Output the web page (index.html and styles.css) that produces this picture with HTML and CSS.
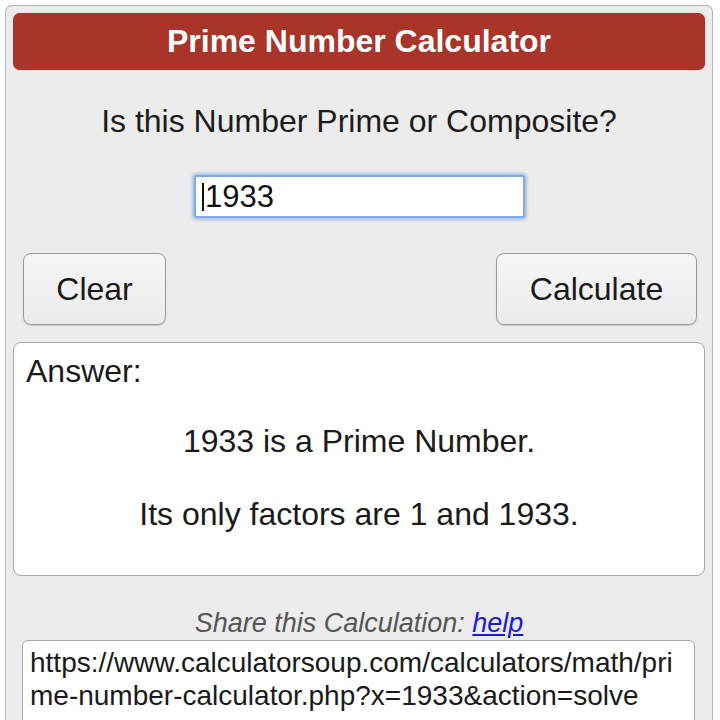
FILE: index.html
```html
<!DOCTYPE html>
<html lang="en">
<head>
<meta charset="utf-8">
<title>Prime Number Calculator</title>
<link rel="stylesheet" href="styles.css">
</head>
<body>
<div class="calc">
  <div class="calc-header">Prime Number Calculator</div>
  <div class="question">Is this Number Prime or Composite?</div>
  <div class="input-row">
    <div class="num-input"><span class="caret"></span>1933</div>
  </div>
  <div class="btn-row">
    <button class="btn btn-clear" type="button">Clear</button>
    <button class="btn btn-calc" type="button">Calculate</button>
  </div>
  <div class="answer">
    <div class="answer-label">Answer:</div>
    <p class="answer-line first">1933 is a Prime Number.</p>
    <p class="answer-line second">Its only factors are 1 and 1933.</p>
  </div>
  <div class="share">Share this Calculation: <a href="#" class="help">help</a></div>
  <textarea class="share-url" readonly>https://www.calculatorsoup.com/calculators/math/prime-number-calculator.php?x=1933&amp;action=solve</textarea>
</div>
</body>
</html>
```
FILE: styles.css
```css
html, body {
  margin: 0;
  padding: 0;
  background: #ffffff;
}
body {
  padding: 5px 0 0 5px;
  font-family: "Liberation Sans", Arial, Helvetica, sans-serif;
  color: #1a1a1a;
  overflow: hidden;
  height: 720px;
  box-sizing: border-box;
}
.calc {
  width: 708px;
  height: 715px;
  box-sizing: border-box;
  border: 1px solid #b4b4b4;
  border-bottom: none;
  border-radius: 7px 7px 0 0;
  background: #ececec;
  padding: 7px 7px 0 7px;
  display: flex;
  flex-direction: column;
  overflow: hidden;
}
.calc-header {
  flex: none;
  height: 57px;
  background: #a9342a;
  border-radius: 7px;
  color: #ffffff;
  font-weight: bold;
  font-size: 32px;
  display: flex;
  align-items: center;
  justify-content: center;
  box-shadow: 0 0 1px rgba(120, 30, 20, 0.6);
}
.question {
  flex: none;
  margin-top: 33px;
  font-size: 32px;
  line-height: 37px;
  text-align: center;
  color: #1c1c1c;
}
.input-row {
  flex: none;
  margin-top: 35px;
  display: flex;
  justify-content: center;
  padding-left: 1px;
}
.num-input {
  width: 331px;
  height: 43px;
  box-sizing: border-box;
  background: #ffffff;
  border: 2px solid #80aaea;
  box-shadow: 0 0 3px 2px rgba(110, 155, 225, 0.55);
  border-radius: 3px;
  font-size: 31px;
  line-height: 39px;
  padding-left: 6px;
  color: #111;
  display: flex;
  align-items: center;
}
.caret {
  display: inline-block;
  width: 2px;
  height: 28px;
  background: #111;
  margin-right: 1px;
}
.btn-row {
  flex: none;
  margin-top: 35px;
  display: flex;
  justify-content: space-between;
  padding: 0 8px 0 10px;
}
.btn {
  height: 72px;
  box-sizing: border-box;
  border: 1px solid #9a9a9a;
  border-radius: 8px;
  background: linear-gradient(#f6f6f6, #ebebeb);
  box-shadow: 0 1px 1px rgba(0, 0, 0, 0.15);
  font-family: "Liberation Sans", Arial, Helvetica, sans-serif;
  font-size: 32px;
  color: #1a1a1a;
  padding: 0;
}
.btn-clear {
  width: 143px;
}
.btn-calc {
  width: 201px;
}
.answer {
  flex: none;
  margin-top: 17px;
  height: 234px;
  box-sizing: border-box;
  background: #ffffff;
  border: 1px solid #a8a8a8;
  border-radius: 8px;
  padding: 10px 12px 0 12px;
  font-size: 32px;
  line-height: 37px;
}
.answer-label {
  color: #1a1a1a;
}
.answer-line {
  margin: 0;
  text-align: center;
  color: #1a1a1a;
}
.answer-line.first {
  margin-top: 33px;
}
.answer-line.second {
  margin-top: 36px;
}
.share {
  flex: none;
  margin-top: 31px;
  font-size: 27px;
  line-height: 32px;
  font-style: italic;
  text-align: center;
  color: #555555;
}
.help {
  color: #1a1ae0;
  text-decoration: underline;
}
.share-url {
  flex: none;
  margin: 1px 10px 0 9px;
  height: 110px;
  box-sizing: border-box;
  border: 1px solid #a8a8a8;
  border-radius: 6px;
  background: #ffffff;
  padding: 5px 7px;
  font-family: "Liberation Sans", Arial, Helvetica, sans-serif;
  font-size: 28px;
  line-height: 33px;
  color: #1a1a1a;
  resize: none;
  overflow: hidden;
  word-break: break-all;
  outline: none;
}
```
